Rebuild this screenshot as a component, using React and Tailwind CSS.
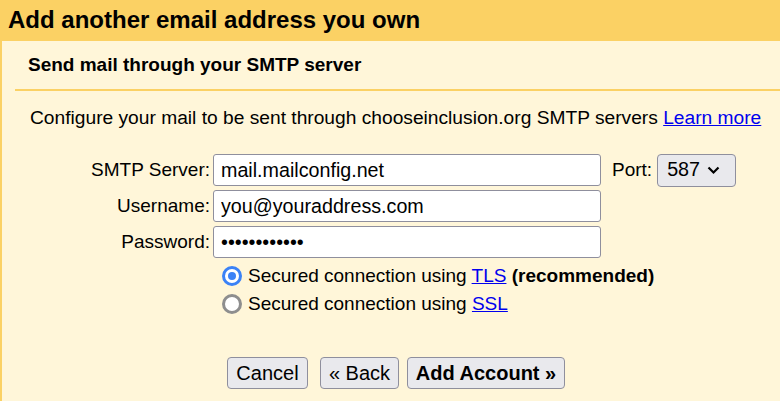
import { useState } from 'react'

const font = { fontFamily: '"Liberation Sans", Arial, sans-serif' }

const inputClass =
  'w-[388px] h-[32px] px-[7px] text-[19.7px] text-black bg-white border border-[#8f8f9d] rounded-[3px] outline-none'

const btnClass =
  'h-[32px] px-0 whitespace-nowrap text-[20px] leading-[24px] text-black bg-[#e9e9ed] border border-[#8f8f9d] rounded-[4px]'

function Field({ label, children }) {
  return (
    <div className="flex items-center h-[32px]">
      <label className="w-[211px] text-right text-[19px] pr-[3px]">{label}</label>
      {children}
    </div>
  )
}

function Radio({ checked, onClick, children }) {
  return (
    <label className="flex items-center gap-[6px] h-[26px] cursor-pointer" onClick={onClick}>
      {checked ? (
        <span className="w-[20px] h-[20px] rounded-full border-[3px] border-[#3b82f6] bg-white flex items-center justify-center">
          <span className="w-[8px] h-[8px] rounded-full bg-[#3b82f6]" />
        </span>
      ) : (
        <span className="w-[20px] h-[20px] rounded-full border-[3px] border-[#8e8e8e] bg-white" />
      )}
      <span>{children}</span>
    </label>
  )
}

export default function App() {
  const [secure, setSecure] = useState('tls')
  const [port, setPort] = useState('587')

  return (
    <div className="w-[780px] h-[401px] overflow-hidden bg-[#fff6d9] text-black" style={font}>
      <div className="h-[41px] bg-[#fbd164] pl-[8px] pt-[6px]">
        <h1 className="text-[24px] font-bold leading-[28px]">Add another email address you own</h1>
      </div>
      <div className="border-l-2 border-[#fbd164] h-[360px]">
        <div className="ml-[13px] border-b-2 border-[#fbd164] h-[50px] pl-[13px] pt-[13px]">
          <h2 className="text-[19px] font-bold leading-[22px]">Send mail through your SMTP server</h2>
        </div>
        <p className="pl-[28px] pt-[15px] text-[19.2px] leading-[24px]">
          Configure your mail to be sent through chooseinclusion.org SMTP servers{' '}
          <a href="#" className="text-[#0000ee] underline">Learn more</a>
        </p>
        <div className="mt-[24px] flex flex-col gap-[4px]">
          <Field label="SMTP Server:">
            <input className={inputClass} defaultValue="mail.mailconfig.net" />
            <span className="ml-[11px] text-[19px]">Port:</span>
            <select
              value={port}
              onChange={e => setPort(e.target.value)}
              className="ml-[5px] w-[79px] h-[33px] pl-[9px] text-[19.7px] bg-[#e9e9ed] border border-[#8f8f9d] rounded-[4px] appearance-none"
            >
              <option>587</option>
              <option>465</option>
              <option>25</option>
            </select>
            <svg className="-ml-[29px] pointer-events-none" width="13" height="9" viewBox="0 0 13 9">
              <path d="M1.5 1.5 6.5 6.5l5-5" fill="none" stroke="#000" strokeWidth="2.2" />
            </svg>
          </Field>
          <Field label="Username:">
            <input className={inputClass} defaultValue="you@youraddress.com" />
          </Field>
          <Field label="Password:">
            <input className={inputClass} type="password" defaultValue="abcdefghijkl" />
          </Field>
        </div>
        <div className="ml-[220px] mt-[5px] flex flex-col gap-[2px] text-[19px]">
          <Radio checked={secure === 'tls'} onClick={() => setSecure('tls')}>
            Secured connection using <a href="#" className="text-[#0000ee] underline">TLS</a>{' '}
            <b>(recommended)</b>
          </Radio>
          <Radio checked={secure === 'ssl'} onClick={() => setSecure('ssl')}>
            Secured connection using <a href="#" className="text-[#0000ee] underline">SSL</a>
          </Radio>
        </div>
        <div className="ml-[225px] mt-[40px] flex items-center">
          <button className={btnClass + ' w-[81px]'}>Cancel</button>
          <button className={btnClass + ' ml-[12px] w-[79px]'}>« Back</button>
          <button className={btnClass + ' ml-[8px] w-[158px] font-bold'}>Add Account »</button>
        </div>
      </div>
    </div>
  )
}
